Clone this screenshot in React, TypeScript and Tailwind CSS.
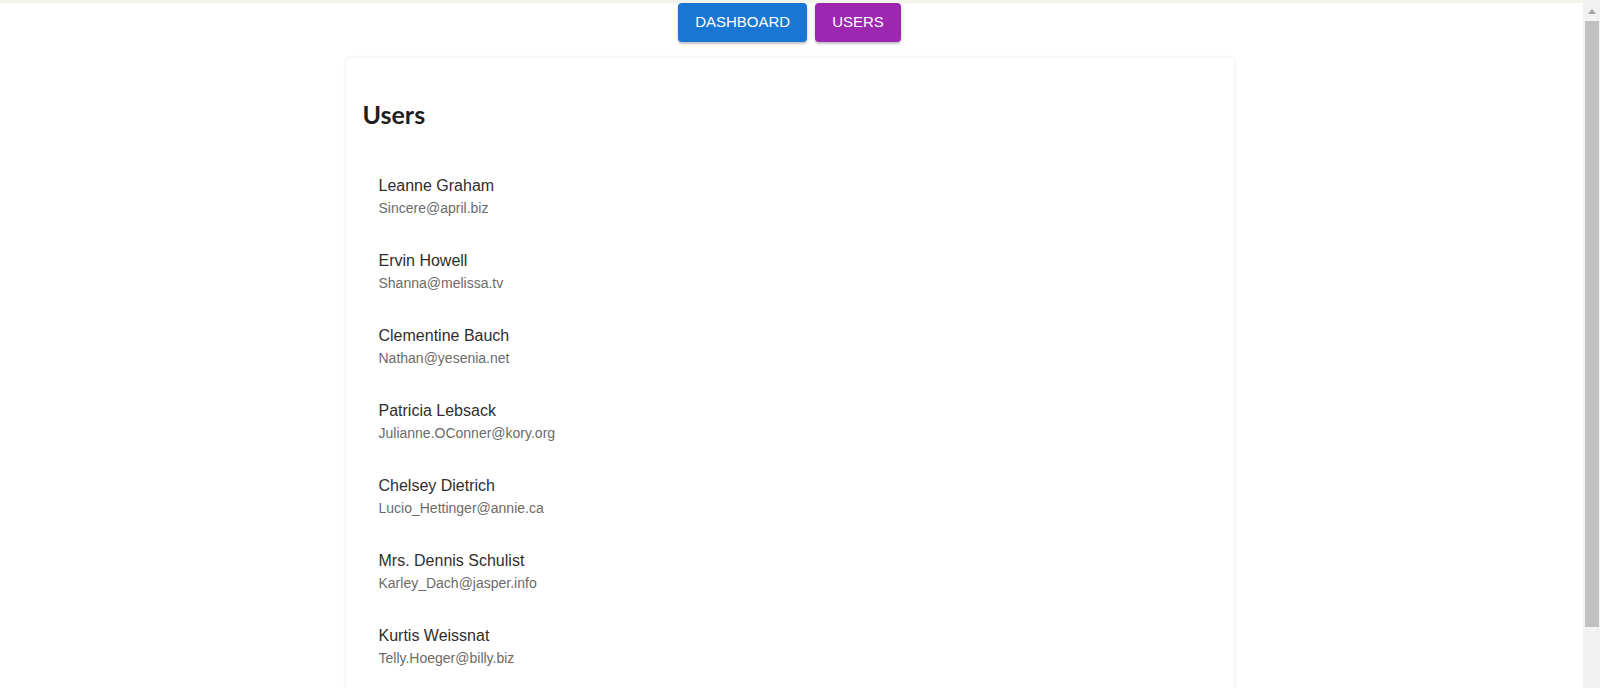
import React from 'react';

const users = [
  { name: 'Leanne Graham', email: 'Sincere@april.biz' },
  { name: 'Ervin Howell', email: 'Shanna@melissa.tv' },
  { name: 'Clementine Bauch', email: 'Nathan@yesenia.net' },
  { name: 'Patricia Lebsack', email: 'Julianne.OConner@kory.org' },
  { name: 'Chelsey Dietrich', email: 'Lucio_Hettinger@annie.ca' },
  { name: 'Mrs. Dennis Schulist', email: 'Karley_Dach@jasper.info' },
  { name: 'Kurtis Weissnat', email: 'Telly.Hoeger@billy.biz' },
];

const NavButton = ({ label, color }: { label: string; color: string }) => (
  <button
    className={`h-[39px] px-[17px] rounded text-[15px] text-white uppercase shadow-[0_2px_2px_rgba(0,0,0,0.18),0_1px_4px_rgba(0,0,0,0.1)] ${color}`}
  >
    {label}
  </button>
);

// window scrollbar as it appears in the screenshot
const ScrollGutter = () => (
  <aside className="w-[17px] shrink-0 bg-[#f1f1f1] flex flex-col items-center">
    <div className="h-[19px] w-full flex items-center justify-center pt-1">
      <svg width="8" height="5" viewBox="0 0 8 5">
        <path d="M4 0 L8 5 L0 5 Z" fill="#a3a3a3" />
      </svg>
    </div>
    <div className="mt-[2px] h-[606px] w-[14px] bg-[#c1c1c1]" />
  </aside>
);

const App: React.FC = () => {
  return (
    <div className="h-screen flex bg-white font-['Liberation_Sans',Arial,sans-serif]">
      <main className="flex-1 overflow-hidden border-t-[3px] border-[#f3f4ea] pr-[4px] pb-[39px]">
        {/* Nav */}
        <nav className="flex justify-center gap-2">
          <NavButton label="Dashboard" color="bg-[#1976d2]" />
          <NavButton label="Users" color="bg-[#9c27b0]" />
        </nav>

        {/* Users card */}
        <div className="w-[888px] mx-auto mt-4 bg-white rounded shadow-[0_0_4px_rgba(0,0,0,0.09)] px-[17px] pt-[40px] pb-4">
          <h2 className="font-['Lato','Open_Sans',sans-serif] font-bold text-[25px] leading-8 text-[#1e1e1e]">Users</h2>

          <ul className="mt-8">
            {users.map((u) => (
              <li key={u.email} className="px-4 pt-3 pb-[19px]">
                <div className="text-[16px] leading-6 text-[#2e2e2e]">{u.name}</div>
                <div className="text-[14px] leading-5 text-[#6b6b6b]">{u.email}</div>
              </li>
            ))}
          </ul>
        </div>
      </main>
      <ScrollGutter />
    </div>
  );
};

export default App;
